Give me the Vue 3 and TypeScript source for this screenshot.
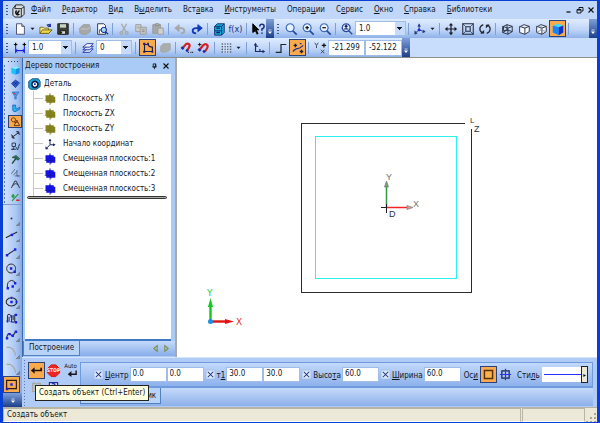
<script setup lang="ts">
import { h, ref, type FunctionalComponent } from 'vue'

type Shape = [d: string, stroke: string, fill?: string, width?: number]

const NAVY = '#1c2f9c'
const DARK = '#26262e'
const BLUE = '#1a22e0'
const GREY = '#a5a8a6'

const cubeWire = 'M4 5L8 3L14 5V11L9 14L3 12V5L9 7L14 5M9 7V14'

const icons: Record<string, Shape[]> = {
  app: [
    ['M2 6L5 2H12L14 4V12L11 15H4L2 13Z', '#222', '#d8dde2'],
    ['M4 6H11V15M11 6L14 4M5 2L4 6', '#222', 'none'],
    ['M6 8A2.5 2.5 0 1 0 9 12M6 12L9 8', '#111', '#777', 1.4],
  ],
  file: [['M4 2H10L13 5V14H4Z', '#446', '#fff'], ['M10 2V5H13', '#446', '#cde']],
  open: [
    ['M1 6H5L6 7H11V13H1Z', '#7a6a10', '#f6e68a'],
    ['M1 13L4 9H15L11 13Z', '#6a5c10', '#ecd64c'],
    ['M9 4Q11 2 13 4M13 2V5H10', NAVY, 'none', 1.3],
  ],
  save: [
    ['M2 2H14V14H2Z', '#1b1b1b', '#3a3d30'],
    ['M4 2H12V7H4Z', '#333', '#c7d6c4'],
    ['M5 10H11V14H5Z', '#111', '#ddd'],
    ['M6 11V13', '#111', 'none', 2],
  ],
  print: [['M2 7L6 3H13L14 6V11L10 14H4L2 12Z', '#999c98', GREY], ['M3 8H11L14 6', '#c6c9c8', 'none']],
  preview: [
    ['M3 2H10L12 4V14H3Z', '#223', '#fff'],
    ['M5 13V9H8', '#345', 'none'],
    ['M10 6A3 3 0 1 0 10.1 6ZM12 11L15 14', NAVY, '#a8dcf4', 1.3],
  ],
  cut: [['M5 2L10 11M11 2L6 11', GREY, 'none', 1.4], ['M5 11A1.6 1.6 0 1 0 5.1 11ZM11 11A1.6 1.6 0 1 0 11.1 11Z', GREY, 'none', 1.4]],
  copy: [['M2 3H8V11H2Z', '#999', '#c9ccca'], ['M7 6H14V14H7Z', '#999', '#c2c5c3'], ['M9 9H12M9 11H12M4 6H6', '#888', 'none']],
  paste: [['M2 3H11V13H2Z', '#999', GREY], ['M5 2H9V4H5Z', '#888', '#bbb'], ['M8 7H14V14H8Z', '#999', '#cfd1cf']],
  undo: [['M4 7H9Q13 7 13 10Q13 13 9 13', GREY, 'none', 2], ['M7 3V11L2 7Z', GREY, GREY]],
  redo: [['M12 7H7Q3 7 3 10Q3 13 7 13', '#1238b8', 'none', 2], ['M9 3V11L14 7Z', '#1238b8', '#1238b8']],
  cabinet: [
    ['M3 5L6 2H14V12L11 15H3Z', '#0b2b70', '#19a6d8'],
    ['M3 5H11V15M11 5L14 2M3 10H11', '#0b2b70', 'none'],
    ['M5 7H9M5 12H9', '#03264c', 'none', 1.5],
  ],
  help: [
    ['M2 2V12L5 10L7 14L8 13L6 9H9Z', '#000', '#000'],
    ['M10 5Q10 2.500 12.500 2.500Q15 2.500 15 5Q15 7 12.500 8V10M12.500 12V13.500', '#1c2f7c', 'none', 1.8],
  ],
  zoom: [['M7 2A4.500 4.500 0 1 0 7.1 2Z', '#3d66b4', '#e6f4ff', 1.3], ['M10 10L14.500 14.500', '#24479c', 'none', 2]],
  zoomIn: [['M7 2A4.500 4.500 0 1 0 7.1 2Z', '#3d66b4', '#e6f4ff', 1.3], ['M10 10L14.500 14.500', '#24479c', 'none', 2], ['M5 6.500H9M7 4.500V8.500', '#111', 'none', 1.4]],
  zoomOut: [['M7 2A4.500 4.500 0 1 0 7.1 2Z', '#3d66b4', '#e6f4ff', 1.3], ['M10 10L14.500 14.500', '#24479c', 'none', 2], ['M5 6.500H9', '#111', 'none', 1.4]],
  zoomFit: [['M7 2A4.500 4.500 0 1 0 7.1 2ZM10 10L14 14', '#24479c', '#e6f4ff', 1.4], ['M4.500 8H9.500M7 4V8M5.500 5.500L7 3.500L8.500 5.500', '#16246c', 'none', 1.3]],
  triad: [['M7 9V3M7 9L13 11M7 9L2 13', '#223a7a', 'none'], ['M5.500 5L7 2L8.500 5ZM12 9L14 11L11 12.500ZM2 10V14L5 13Z', '#223a7a', '#223a7a', 0.5], ['M6 8H8V10H6Z', BLUE, BLUE]],
  move: [['M8 3V13M3 8H13', '#1c1c24', 'none', 1.4], ['M8 1L10.500 4H5.500ZM8 15L10.500 12H5.500ZM1 8L4 5.500V10.500ZM15 8L12 5.500V10.500Z', 'none', '#1c1c24']],
  frame: [['M2 2H14V14H2ZM5.500 5.500H10.500V10.500H5.500Z', '#222a38', 'none', 1.2], ['M2 2L5 5M14 2L11 5M2 14L5 11M14 14L11 11', '#222a38', 'none', 0.8]],
  rotate: [['M6 3Q1 5 2.500 10L5 13M10 13Q15 11 13.500 6L11 3', '#20242c', 'none', 1.5], ['M2.500 13H7V9ZM13.500 3H9V7Z', 'none', '#20242c']],
  wire: [[cubeWire, '#222836', 'none'], ['M4 5V10L9 9M8 3V9L14 11M3 12L8 9', '#222836', 'none']],
  hidden: [[cubeWire, '#222836', '#f4f8ff']],
  thin: [[cubeWire, '#222836', '#f4f8ff'], ['M8 4V9L14 11M8 9L3 12', '#8c94a8', 'none']],
  shaded: [['M2 4L8 2L14 4L9 6Z', 'none', '#3bdcff'], ['M2 4L9 6V15L2 12Z', 'none', '#1683ff'], ['M9 6L14 4V12L9 15Z', 'none', '#1131c8']],
  steps: [
    ['M3 6V14M13 6V14M3 11H13', BLUE, 'none', 1.2],
    ['M5 9L3 11L5 13M11 9L13 11L11 13', BLUE, 'none'],
    ['M1 4H5M3 2V6M11 4H15M13 2V6', '#111', 'none', 1.4],
  ],
  layers: [['M2 13L7 9H14L10 13Z', NAVY, '#dce8ff'], ['M2 10L7 6H14L10 10Z', NAVY, '#dce8ff'], ['M2 7L7 3H14L10 7Z', NAVY, '#f6faff']],
  sketch: [['M4 3V12H13V7Q9 7 8 4H4', '#1b1b50', 'none', 1.3], ['M2.500 2H5V4.500H2.500ZM2.500 11H5V13.500H2.500ZM12 11H14V13.500H12ZM7 2H9V4.500H7Z', 'none', '#231c70']],
  solid: [['M3 6L6 3H14V10L11 12Q4 14 3 12Z', '#a5a8a8', '#aaadab']],
  magnet: [['M3 8L7 3.500Q10 2 11 5Q11 7 8 11', '#d42020', 'none', 2.6], ['M1.500 7L4 9.500M7 10L9 12', '#1830a0', 'none', 2.6], ['M9 13H10M12 13H13M14 13H15', '#111', 'none', 1.4]],
  magnet2: [['M3 10L7 5Q10 2 12 5Q13 7 9 12', '#d42020', 'none', 2.6], ['M1.500 9L4 11.500M7 11L9 13', '#1830a0', 'none', 2.6], ['M1 4H5M3 2V6', '#111', 'none']],
  grid: [['M3 3.500H14M3 6.500H14M3 9.500H14M3 12.500H14', '#333', 'none', 1.2], ['M5.500 2V14M8.500 2V14M11.500 2V14', '#cfe0fb', 'none', 1.6]],
  axes: [['M4 3V12H14M4 6H7M9 12V9', '#1c2a66', 'none', 1.3], ['M2 5L4 2L6 5ZM12 10L15 12L12 14Z', 'none', '#1c2a66']],
  ortho: [['M2 13H8V4H14', '#20242c', 'none', 1.4]],
  snap: [['M3 5H7M5 3V7M10 12H14M12 10V14', '#1a1a40', 'none', 1.6], ['M2 12L6 9L10 8L14 5M10 3H12M3 10H5', '#1c2f9c', 'none', 1.3]],
  yx: [['M10 5H15M12.500 2.500V7.500', '#111', 'none', 1.4], ['M2 2L4 5L6 2M4 5V8M9 10L13 14M13 10L9 14', '#333a50', 'none']],
  cube: [['M2 4L9 2L14 4L8 6Z', 'none', '#80f0ff'], ['M2 4L8 6V14L2 12Z', 'none', '#1bc4fa'], ['M8 6L14 4V12L8 14Z', 'none', '#1490ea']],
  surface: [['M2 8L8 3L14 7L8 14Z', '#1b3a96', '#2b58c8'], ['M5 6L11 10M11 5L5 11', '#143080', 'none']],
  funnel: [['M3 3H13L9 9V13H7V9Z', '#1464c8', '#54a9f8'], ['M5 4L9 7', '#d33', 'none', 1.5]],
  bend: [['M4 3V10Q5 14 9 12L14 9V6L9 9L8 3Z', '#0a4fb0', '#24b8f4']],
  shapes: [['M5 2.500A3 3 0 1 0 5.1 2.500ZM10 6L14 14H6ZM6 9H11', '#5b2c08', 'none', 1.3]],
  dims: [['M3 12L13 5M2 8L6 14M10 3L14 8', '#223', 'none', 1.4], ['M3 9V13H7M13 8V4H9', '#223', 'none']],
  symbols: [['M3 3H8V8H3ZM5.500 8V12H2H9M9 9L11 13L14 4', '#203050', 'none', 1.3]],
  hammer: [['M3 5L9 2L14 7L11 9L8 6Z', '#1d4a32', '#2e7350'], ['M9 6L3 14', '#1d4a32', 'none', 2]],
  param: [['M2 10L7 3M5 12L11 5M10 5V13H14M7 13H14', '#50607a', 'none', 1.2]],
  measure: [['M2 13L7 3H9L14 13M4 10Q8 4 12 9', '#303540', 'none', 1.4]],
  spec: [['M2 6H7M4.500 3V9', '#1a9a30', 'none', 2], ['M3 13L12 3', '#1a9a30', 'none', 1.5], ['M9 12H14', '#e02020', 'none', 2.2]],
  point: [['M7 7H9V9H7Z', 'none', '#16206c']],
  line: [['M1 12L15 5', DARK, 'none', 1.3], ['M7 7H10V10H7Z', 'none', BLUE]],
  segment: [['M3 12L12 6', DARK, 'none', 1.3], ['M1 11H4V14H1ZM11 4H14V7H11Z', 'none', BLUE]],
  circle: [['M7.500 2.500A5.500 5.500 0 1 0 7.600 2.500Z', DARK, 'none', 1.2], ['M6 6.500H9V9.500H6ZM10.500 10.500H13.500V13.500H10.500Z', 'none', BLUE]],
  arc: [['M3 12Q2 4 8 3Q11 3 13 6', DARK, 'none', 1.2], ['M2 11H5V14H2ZM11 5H14V8H11ZM8 9H11V12H8Z', 'none', BLUE]],
  ellipse: [['M8 3.500A6.500 5 0 1 0 8.1 3.500Z', DARK, 'none', 1.3], ['M6.500 7H9.500V10H6.500ZM7 2H9V5H7ZM13 7H15V10H13Z', 'none', BLUE]],
  offset: [['M3 12V5Q3 2 6 3Q8 4 8 8V11Q9 14 12 12V3M5 12V6M10 4V10', DARK, 'none', 1.2], ['M2 10H4V13H2ZM7 4H9V7H7ZM12 2H15V5H12ZM12 11H15V14H12ZM7 11H9V13H7Z', 'none', BLUE]],
  spline: [['M2 12Q4 4 7 8T13 4', DARK, 'none', 1.3], ['M1 11H4V14H1ZM4 6H7V9H4ZM8 8H11V11H8ZM12 3H15V6H12Z', 'none', BLUE]],
  fillet: [['M2 3H6Q12 5 13 13', '#a3a89c', 'none', 1.4]],
  rect: [['M2 3H14V13H2Z', '#2a1a10', 'none', 1.4], ['M6.500 6.500H9.500V9.500H6.500Z', 'none', BLUE], ['M1 12H4V15H1Z', 'none', BLUE]],
  part: [['M2 5L6 2H13L15 5V11L11 14H4L2 12Z', '#0a4a6c', '#19a9d8'], ['M9 5A3.500 3.500 0 1 0 9.1 5Z', '#08184c', '#fff', 1.8], ['M8 7H10V9H8Z', 'none', '#1238b8']],
  planeOlive: [['M2 3H7V2H9V3H13V5H15V13H10V14H8V13H3V10H2Z', 'none', '#858320'], ['M8 0V16M1 10H15', '#77751c', 'none', 0.8]],
  planeBlue: [['M2 3H7V2H9V3H13V5H15V13H10V14H8V13H3V10H2Z', 'none', '#1512e8'], ['M8 0V16M1 10H15', '#1a188c', 'none', 0.8]],
  origin: [['M8 9V2M8 9H14M8 9L3 14', '#1b2368', 'none', 1.3], ['M6 4L8 1L10 4ZM12 7L15.500 9L12 11ZM2 11V15H6Z', 'none', '#1b2368']],
  enter: [['M13 5V8H5', '#1c1410', 'none', 1.8], ['M6 4.500V11.500L2 8Z', 'none', '#1c1410']],
  stop: [['M5.500 2H10.500L14.500 6V10.500L10.500 14.500H5.500L1.500 10.500V6Z', '#d01818', '#f02222']],
  auto: [['M14 8V12H8', '#16161c', 'none', 1.5], ['M9 8.500V15L5 12Z', 'none', '#16161c']],
  memo: [['M3 3H13V13H3ZM5 3V1M11 3V1', GREY, '#b8bdc0', 1.3]],
  query: [['M3 2H13V14H3Z', NAVY, '#e9f1ff', 1.5]],
  check: [['M1.500 1.500H14.500V14.500H1.500Z', '#9ab7e6', '#dbe8fb'], ['M4 4L12 12M12 4L4 12', '#1b2f74', 'none', 1.5]],
  square: [['M3 3H13V13H3Z', '#55320c', '#ffb24c', 1.8]],
  cross: [['M3.500 3.500H12.500V12.500H3.500Z', '#1b2348', 'none', 1.5], ['M8 1V15M1 8H15', '#2a35e0', 'none', 1.5]],
  caret: [['M4.500 6.500H11.500L8 10.500Z', 'none', '#101828']],
  more: [['M5 4H11', '#fff', 'none', 1.4], ['M4 7H12L8 12Z', 'none', '#fff']],
  pin: [['M5 2H11V9H5ZM3 9H13M8 9V14', '#111', 'none', 1.8], ['M10 2V9', '#111', 'none', 2]],
  close: [['M3 3L13 13M13 3L3 13', '#111', 'none', 2.2]],
  minimize: [['M3 12H11', '#111', 'none', 2.6]],
  restore: [['M6 6V3H14V10H11M2 7H10V14H2Z', '#111', 'none', 1.8], ['M2 8H10M6 3H14', '#111', 'none', 2]],
  left: [['M11 3V13L5 8Z', '#7c8c3c', 'none', 1.8]],
  right: [['M5 3V13L11 8Z', '#7c8c3c', 'none', 1.8]],
}

const Glyph: FunctionalComponent<{ name: string; size?: number }> = ({ name, size = 16 }) =>
  h(
    'svg',
    { viewBox: '0 0 16 16', width: size, height: size, 'aria-hidden': 'true' },
    icons[name].map(([d, stroke, fill = 'none', width = 1]) =>
      h('path', { d, stroke, fill, 'stroke-width': width }),
    ),
  )
Glyph.props = ['name', 'size']

const menus = [
  ['', 'Ф', 'айл'], ['', 'Р', 'едактор'], ['', 'В', 'ид'], ['В', 'ы', 'делить'], ['Вст', 'а', 'вка'],
  ['', 'И', 'нструменты'], ['Опера', 'ц', 'ии'], ['С', 'е', 'рвис'], ['', 'О', 'кно'], ['', 'С', 'правка'],
  ['', 'Б', 'иблиотеки'],
]

const mainBar = [
  'grip', 'file', 'caret', 'open', 'save', '|', 'print', 'preview', '|', 'cut', 'copy', 'paste', '|',
  'undo', 'redo', '|', 'cabinet', 'fx', '|', 'help', 'more', 'grip', 'zoom', 'zoomIn', 'zoomOut', '|',
  'zoomFit', 'scale', '|', 'triad', 'caret', '|', 'move', 'frame', 'rotate', '|', 'wire', 'hidden',
  'thin', 'shaded', '|',
]
const stateBar = [
  'grip', 'steps', 'step', '||', 'layers', 'layer', '||', 'sketch', 'solid', '|', 'magnet', 'magnet2', '|',
  'grid', 'caret', '||', 'axes', '|', 'ortho', 'snap', '|', 'yx', 'coords', 'more',
]
const pressed = new Set(['shaded', 'sketch', 'snap'])

const sections = ['cube', 'surface', 'funnel', 'bend', 'shapes', 'dims', 'symbols', 'hammer', 'param', 'measure', 'spec']
const tools = ['point', 'line', 'segment', 'circle', 'arc', 'ellipse', 'offset', 'spline', 'fillet', 'fillet', 'rect']

const tree = [
  ['planeOlive', 'Плоскость XY'], ['planeOlive', 'Плоскость ZX'], ['planeOlive', 'Плоскость ZY'],
  ['origin', 'Начало координат'], ['planeBlue', 'Смещенная плоскость:1'],
  ['planeBlue', 'Смещенная плоскость:2'], ['planeBlue', 'Смещенная плоскость:3'],
]

const coordX = ref('-21.299')
const coordY = ref('-52.122')

const params = ref([
  { id: 'center', label: ['', 'Ц', 'ентр'], values: ['0.0', '0.0'] },
  { id: 'p1', label: ['т', '1', ''], values: ['30.0', '30.0'] },
  { id: 'height', label: ['Высо', 'т', 'а'], values: ['60.0'] },
  { id: 'width', label: ['', 'Ш', 'ирина'], values: ['60.0'] },
])
</script>

<template>
  <div class="window">
    <nav class="menubar">
      <span class="grip"></span>
      <Glyph name="app" :size="15" />
      <span class="menus">
        <button v-for="m in menus" :key="m.join('')" type="button">{{ m[0] }}<u>{{ m[1] }}</u>{{ m[2] }}</button>
      </span>
      <span class="window-buttons">
        <button type="button" aria-label="Свернуть"><Glyph name="minimize" :size="8" /></button>
        <button type="button" aria-label="Восстановить"><Glyph name="restore" :size="8" /></button>
        <button type="button" aria-label="Закрыть"><Glyph name="close" :size="8" /></button>
      </span>
    </nav>

    <div class="toolbar">
      <template v-for="(t, i) in mainBar" :key="i">
        <span v-if="t === 'grip'" class="grip"></span>
        <span v-else-if="t === '|'" class="sep"></span>
        <select v-else-if="t === 'scale'" class="combo scale" aria-label="Масштаб"><option>1.0</option></select>
        <button v-else-if="t === 'fx'" type="button" class="tool fx">f(x)</button>
        <button v-else-if="t === 'more'" type="button" class="more" aria-label="Ещё"><Glyph name="more" :size="8" /></button>
        <button v-else type="button" :class="['tool', { narrow: t === 'caret', pressed: pressed.has(t) }]" :aria-label="t">
          <Glyph :name="t" :size="t === 'caret' ? 9 : 14" />
        </button>
      </template>
      <button type="button" class="more end" aria-label="Ещё"><Glyph name="more" :size="8" /></button>
    </div>

    <div class="toolbar short">
      <div class="strip">
        <template v-for="(t, i) in stateBar" :key="i">
          <span v-if="t === 'grip'" class="grip"></span>
          <span v-else-if="t === '|'" class="sep"></span>
          <span v-else-if="t === '||'" class="sep wide"></span>
          <select v-else-if="t === 'step'" class="combo step" aria-label="Шаг курсора"><option>1.0</option></select>
          <select v-else-if="t === 'layer'" class="combo layer" aria-label="Слой"><option>0</option></select>
          <template v-else-if="t === 'coords'">
            <input v-model="coordX" class="coord" aria-label="X" />
            <input v-model="coordY" class="coord" aria-label="Y" />
          </template>
          <button v-else-if="t === 'more'" type="button" class="more" aria-label="Ещё"><Glyph name="more" :size="8" /></button>
          <button v-else type="button" :class="['tool', { narrow: t === 'caret', pressed: pressed.has(t) }]" :aria-label="t">
            <Glyph :name="t" :size="t === 'caret' ? 9 : 14" />
          </button>
        </template>
      </div>
    </div>

    <div class="body">
      <aside class="compact">
        <span class="grip-top"></span>
        <div class="sections">
          <button v-for="s in sections" :key="s" type="button" :class="{ pressed: s === 'shapes' }" :aria-label="s">
            <Glyph :name="s" :size="11" />
          </button>
        </div>
        <div class="tools">
          <button v-for="(t, i) in tools" :key="i" type="button" :class="{ pressed: t === 'rect', corner: t !== 'rect' && t !== 'offset' }" :aria-label="t">
            <Glyph :name="t" :size="13" />
          </button>
        </div>
        <button type="button" class="more foot" aria-label="Ещё"><Glyph name="more" :size="8" /></button>
      </aside>

      <div class="work">
        <div class="docs">
          <section class="tree-panel">
            <header>
              <h2>Дерево построения</h2>
              <button type="button" aria-label="Закрепить"><Glyph name="pin" :size="7" /></button>
              <button type="button" aria-label="Закрыть"><Glyph name="close" :size="8" /></button>
            </header>
            <div class="tree">
              <div class="root"><Glyph name="part" :size="14" />Деталь</div>
              <ul>
                <li v-for="n in tree" :key="n[1]"><Glyph :name="n[0]" :size="12" />{{ n[1] }}</li>
              </ul>
              <hr />
            </div>
            <footer>
              <button type="button" class="tab">Построение</button>
              <button type="button" class="arrow" aria-label="Назад"><Glyph name="left" :size="9" /></button>
              <button type="button" class="arrow" aria-label="Вперёд"><Glyph name="right" :size="9" /></button>
            </footer>
          </section>

          <main class="viewport">
            <svg viewBox="177 58 420 299" preserveAspectRatio="xMinYMin meet">
              <g fill="none" shape-rendering="crispEdges">
                <path d="M465 123.500H301.500V292.500H471.500V129" stroke="#2b2b2b" />
                <path d="M315.500 136.500H456.500V278.500H315.500Z" stroke="#2cf0f0" />
              </g>
              <path d="M386.500 207V187" stroke="#2f9a40" stroke-width="1.500" />
              <path d="M387 207.500H408" stroke="#f42424" stroke-width="1.500" />
              <path d="M381 207.500H387M386.500 204V213" stroke="#222" />
              <path d="M386.500 181L384.500 187H388.500Z" stroke="#6b7d6b" fill="#7f9a80" stroke-width=".7" />
              <path d="M413 207.500L407 205.500V209.500Z" stroke="#8d7676" fill="#c9a4a4" stroke-width=".7" />
              <text x="386" y="180" class="mark">Y</text>
              <text x="413" y="207" class="mark">X</text>
              <text x="389" y="217" class="mark dark">D</text>
              <text x="470" y="123" class="mark dark small">L</text>
              <text x="474" y="132" class="mark dark">Z</text>
              <path d="M210.500 321V305" stroke="#10c820" stroke-width="2.400" />
              <path d="M210.500 298L213 307H208Z" fill="#10c820" />
              <path d="M211 321.500H226" stroke="#e01212" stroke-width="2.400" />
              <path d="M234 321.500L225 319V324Z" fill="#e01212" />
              <circle cx="210.500" cy="321.500" r="2.500" fill="#1e8ee0" />
              <text x="207" y="296" class="axis green">Y</text>
              <text x="236" y="325" class="axis red">X</text>
            </svg>
          </main>
        </div>

        <section class="properties">
          <div class="actions">
            <button type="button" class="pressed" aria-label="Создать объект"><Glyph name="enter" :size="15" /></button>
            <button type="button" class="stop"><Glyph name="stop" :size="15" /><span>STOP</span></button>
            <button type="button" class="auto"><Glyph name="auto" :size="15" /><span>Auto</span></button>
            <button type="button" aria-label="Запомнить"><Glyph name="memo" :size="13" /></button>
            <button type="button" class="query"><Glyph name="query" :size="13" /><span>?</span></button>
            <div class="tooltip" role="tooltip">Создать объект (Ctrl+Enter)</div>
          </div>
          <div class="sheet">
            <form class="params" @submit.prevent>
              <div v-for="p in params" :key="p.id" class="field">
                <Glyph name="check" :size="11" />
                <label :for="p.id">{{ p.label[0] }}<u>{{ p.label[1] }}</u>{{ p.label[2] }}</label>
                <input v-for="(_, i) in p.values" :id="i ? undefined : p.id" :key="i" v-model="p.values[i]" :aria-label="i ? p.label.join('') + ' Y' : undefined" />
              </div>
              <div class="field">
                <span class="caption">Ос<u>и</u></span>
                <button type="button" class="tool pressed" aria-label="Без осей"><Glyph name="square" :size="13" /></button>
                <button type="button" class="tool" aria-label="С осями"><Glyph name="cross" :size="13" /></button>
              </div>
              <div class="field style-field">
                <span class="caption">Сти<u>л</u>ь</span>
                <button type="button" class="line-style" aria-label="Стиль линии"><span class="sample"></span><span class="drop">▸</span></button>
              </div>
            </form>
            <div class="tabs">
              <button type="button" class="tab"><Glyph name="rect" :size="10" />Прямоугольник</button>
            </div>
          </div>
        </section>
      </div>
    </div>

    <footer class="status">
      <span class="message">Создать объект</span>
      <span class="cell"></span>
      <span class="resize"></span>
    </footer>
  </div>
</template>

<style>
body {
  margin: 0;
  background: #c4dafa;
}
</style>

<style scoped>
.window {
  display: flex;
  flex-direction: column;
  box-sizing: border-box;
  min-height: 100vh;
  border: solid #0a3fd4;
  border-width: 1px 3px 2px;
  background: #c4dafa;
  color: #14161c;
  font: 8px/12px 'DejaVu Sans Condensed', 'DejaVu Sans', sans-serif;
  overflow: hidden;
}
button, input, select {
  box-sizing: border-box;
  margin: 0;
  padding: 0;
  border: 0;
  background: none;
  color: inherit;
  font: inherit;
}
button {
  display: flex;
  align-items: center;
  justify-content: center;
  flex: none;
}
svg { display: block; flex: none; }
u { text-underline-offset: 1px; }

.grip {
  flex: none;
  width: 8px;
  height: 12px;
  background: radial-gradient(circle, #41588c 1px, transparent 1px) 0 0 / 8px 3px;
}
.menubar {
  display: flex;
  align-items: center;
  height: 18px;
  background: #c0d7fa;
}
.menus {
  display: flex;
  gap: 11px;
  margin-left: 5px;
}
.window-buttons {
  display: flex;
  gap: 3px;
  margin-left: auto;
  padding-right: 2px;
}
.toolbar, .strip {
  display: flex;
  align-items: center;
  height: 19px;
  background: linear-gradient(#dfecff, #bcd3f8 60%, #8fb2ea);
}
.toolbar.short {
  background: #c8ddfb;
  border-bottom: 1px solid #8d8f88;
}
.tool {
  width: 17px;
  height: 17px;
}
.tool.narrow { width: 9px; }
.fx {
  color: #1c2f7c;
  font-size: 9px;
}
.pressed {
  border: 1px solid #29427c;
  background: #f9aa4c;
}
.sep {
  flex: none;
  width: 1px;
  height: 12px;
  margin: 0 2px;
  background: #7d9fd6;
}
.sep.wide { margin: 0 3px; }
.more {
  width: 8px;
  height: 19px;
  align-items: flex-end;
  padding-bottom: 2px;
  background: linear-gradient(#7e9fd8, #1d3f8c);
}
.more.end { margin-left: auto; }
.combo {
  flex: none;
  height: 15px;
  padding-left: 3px;
  border: 1px solid #9ebde9;
  appearance: none;
  background:
    linear-gradient(#101828, #101828) right 3px top 5px / 5px 1px no-repeat,
    linear-gradient(#101828, #101828) right 4px top 6px / 3px 1px no-repeat,
    linear-gradient(#101828, #101828) right 5px top 7px / 1px 1px no-repeat,
    linear-gradient(#c6dbfa, #c6dbfa) right / 10px 100% no-repeat,
    #fff;
}
.scale { width: 51px; }
.step { width: 44px; }
.layer { width: 36px; }
.coord {
  width: 37px;
  height: 16px;
  padding-left: 3px;
  border: 1px solid #9ebde9;
  background: #fff;
}

.body {
  display: flex;
  flex: 1;
}
.compact {
  display: flex;
  flex-direction: column;
  align-items: stretch;
  width: 19px;
  background: linear-gradient(90deg, #d6e5fd, #a9c5f2 70%, #86a9e2);
}
.grip-top {
  height: 3px;
  margin: 2px 4px 1px;
  background: radial-gradient(circle, #2c3c66 1px, transparent 1px) 0 0 / 3px 3px;
}
.sections, .tools {
  display: grid;
  grid-auto-rows: 1fr;
}
.sections {
  height: 140px;
  margin-bottom: 3px;
  padding-left: 5px;
  border-bottom: 1px solid #7f9fd4;
  background: radial-gradient(circle, #5b76ae 1px, transparent 1px) 0 0 / 3px 4px repeat-y;
}
.tools {
  height: 183px;
  padding: 2px 2px 0 0;
}
.corner {
  background: linear-gradient(135deg, transparent 50%, #7a8696 50%) right bottom 1px / 4px 4px no-repeat;
}
.foot {
  width: auto;
  height: auto;
  flex: 1;
}

.work {
  display: flex;
  flex: 1;
  flex-direction: column;
  min-width: 0;
}
.docs {
  display: flex;
  flex: 1;
}
.tree-panel {
  display: flex;
  flex-direction: column;
  box-sizing: border-box;
  width: 153px;
  padding: 0 4px 0 2px;
  border-left: 1px solid #3c68ac;
  background: #a9cbf6;
}
.tree-panel header {
  display: flex;
  align-items: center;
  gap: 4px;
  height: 16px;
  padding-right: 1px;
}
h2 {
  flex: 1;
  margin: 0;
  font: inherit;
}
.tree {
  flex: 1;
  padding: 2px 4px 0 2px;
  border-bottom: 2px solid #3f78c4;
  background: #fff;
}
.root, li {
  display: flex;
  align-items: center;
  height: 15px;
}
.root { gap: 3px; }
ul {
  margin: 0 0 0 6px;
  padding: 0;
  border-left: 1px solid #c9c8c0;
  list-style: none;
}
li { gap: 7px; }
li::before {
  content: '';
  width: 9px;
  height: 1px;
  margin-right: -6px;
  background: #c9c8c0;
}
hr {
  height: 1px;
  margin: 0;
  border: 1px solid #333;
  border-radius: 2px;
  background: #aaa;
}
.tree-panel footer {
  display: flex;
  align-items: center;
  height: 15px;
  margin: 0 -4px 1px -2px;
  padding-right: 3px;
  background: linear-gradient(#c5dafa, #88adea);
}
.tab {
  height: 100%;
  padding: 0 5px;
  border: 1px solid #5580c0;
  border-top: 0;
  background: #b8d3f8;
}
.tree-panel footer .tab { margin-right: auto; }
.arrow { width: 11px; }
.viewport {
  flex: 1;
  min-width: 0;
  border-left: 2px solid #a9aaa6;
  background: #fff;
}
.viewport svg { width: 100%; }
.mark {
  fill: #707070;
  font: 9px 'Liberation Sans', sans-serif;
}
.mark.dark { fill: #333; }
.mark.small { font-size: 8px; }
.axis { font: 9px 'DejaVu Sans', sans-serif; }
.green { fill: #28c838; }
.red { fill: #e83030; }

.properties {
  display: flex;
  align-items: flex-start;
  gap: 1px;
  box-sizing: border-box;
  height: 50px;
  padding: 4px 4px 0 6px;
  border-top: 1px solid #d4e4fc;
  background:
    radial-gradient(circle, #5b76ae 1px, transparent 1px) 1px 4px / 3px 3px repeat-y,
    #b0ccf6;
}
.actions {
  position: relative;
  display: grid;
  grid-template-columns: repeat(3, 17px);
  grid-auto-rows: 17px;
}
.actions button { position: relative; }
.actions span {
  position: absolute;
  inset: 0;
  font-size: 5px;
  line-height: 17px;
  text-align: center;
}
.actions .stop span {
  color: #fff;
  font-weight: bold;
}
.actions .auto span {
  font-size: 6px;
  line-height: 8px;
}
.actions .query span {
  color: #1c2f9c;
  font-size: 9px;
  font-weight: bold;
}
.tooltip {
  position: absolute;
  z-index: 2;
  top: 23px;
  left: 7px;
  padding: 1px 3px;
  border: 1px solid #222;
  background: #ffffe1;
  white-space: nowrap;
}
.sheet {
  flex: 1;
  min-width: 0;
}
.params {
  display: flex;
  align-items: center;
  gap: 1px;
  height: 23px;
  padding: 0 4px 0 12px;
  border: 1px solid #6f9bdc;
  border-width: 1px 1px 2px;
  background: linear-gradient(#c2d9fb, #8db1ec);
}
.field {
  display: flex;
  align-items: center;
}
.field label { margin: 2px 1px 0; }
.caption { margin: 2px 2px 0; }
.field input {
  width: 37px;
  height: 15px;
  padding: 0 2px 2px;
  border: 1px solid #9ebde9;
  background: #fff;
}
.style-field {
  flex: 1;
}
.line-style {
  flex: 1;
  height: 15px;
  padding-left: 2px;
  background: #fff;
}
.sample {
  flex: 1;
  height: 1px;
  background: #2530ff;
}
.drop {
  width: 5px;
  height: 100%;
  border: 1px solid #222;
  background: #ece9d8;
  font-size: 6px;
  line-height: 15px;
}
.tabs {
  height: 18px;
  background: linear-gradient(#c5dafa, #8db0ea);
}
.tabs .tab {
  gap: 2px;
  height: 16px;
  padding: 0 4px;
  font-weight: normal;
}

.status {
  display: flex;
  align-items: stretch;
  height: 14px;
  border-top: 1px solid #b5b3a6;
  background: #ece9d8;
}
.message {
  flex: 1;
  padding-left: 3px;
  border: 1px solid #b9b6a6;
  border-bottom-color: #fff;
}
.cell {
  width: 61px;
  margin-left: 1px;
  border: 1px solid #b9b6a6;
  border-bottom-color: #fff;
}
.resize {
  width: 12px;
  background: radial-gradient(circle, #a9a694 1px, transparent 1px) 0 0 / 4px 4px;
  clip-path: polygon(100% 10%, 100% 100%, 0 100%);
}
</style>
